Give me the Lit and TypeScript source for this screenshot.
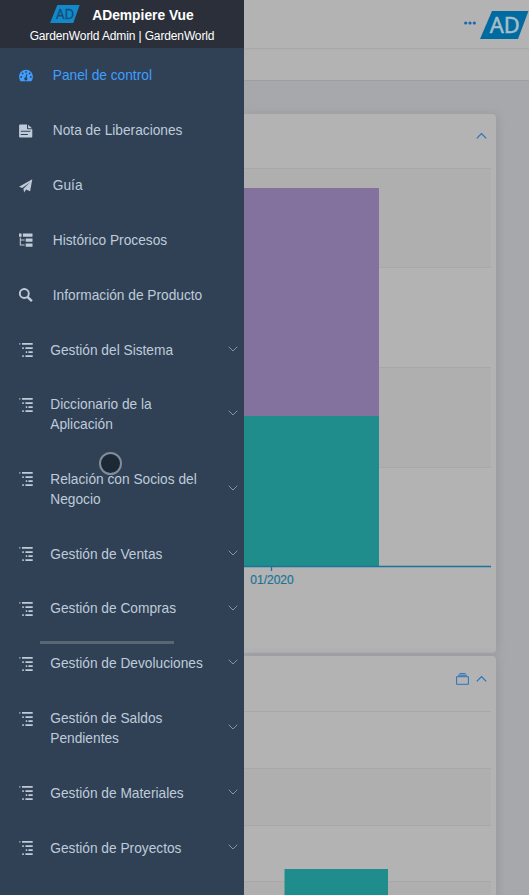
import { LitElement, html, css, svg } from "lit";
import { customElement } from "lit/decorators.js";
import { classMap } from "lit/directives/class-map.js";

type Entry = { icon: string; lines: string[]; group?: boolean; active?: boolean };

const entries: Entry[] = [
  { icon: "gauge", lines: ["Panel de control"], active: true },
  { icon: "document", lines: ["Nota de Liberaciones"] },
  { icon: "plane", lines: ["Guía"] },
  { icon: "tree", lines: ["Histórico Procesos"] },
  { icon: "search", lines: ["Información de Producto"] },
  { icon: "nested", lines: ["Gestión del Sistema"], group: true },
  { icon: "nested", lines: ["Diccionario de la", "Aplicación"], group: true },
  { icon: "nested", lines: ["Relación con Socios del", "Negocio"], group: true },
  { icon: "nested", lines: ["Gestión de Ventas"], group: true },
  { icon: "nested", lines: ["Gestión de Compras"], group: true },
  { icon: "nested", lines: ["Gestión de Devoluciones"], group: true },
  { icon: "nested", lines: ["Gestión de Saldos", "Pendientes"], group: true },
  { icon: "nested", lines: ["Gestión de Materiales"], group: true },
  { icon: "nested", lines: ["Gestión de Proyectos"], group: true },
];

const glyphs: Record<string, unknown> = {
  gauge: svg`<path fill-rule="evenodd" d="M1.600 12.300A7 7 0 0 1 .1 7.800C.1 3.900 3.200.800 7 .800s6.900 3.100 6.900 7a7 7 0 0 1-1.500 4.500ZM7 2a.9.9 0 1 0 0 1.800a.9.9 0 1 0 0-1.800M3.600 3.500a.9.9 0 1 0 0 1.800a.9.9 0 1 0 0-1.800M10.600 3.500a.9.9 0 1 0 0 1.800a.9.9 0 1 0 0-1.800M2.200 7a.9.9 0 1 0 0 1.800a.9.9 0 1 0 0-1.800M11.800 7a.9.9 0 1 0 0 1.800a.9.9 0 1 0 0-1.800M7.300 5L6.500 8.200a1.600 1.600 0 1 0 1.200 0.200L8.300 5.200Z"/>`,
  document: svg`<path fill-rule="evenodd" d="M1.100.5H8V4.300Q8 5.200 8.900 5.200H13.300V12.500Q13.300 13.500 12.300 13.500H1.100Q.1 13.500 .1 12.500V1.500Q.1.5 1.100.5ZM1.800 6.700V7.700H11.500V6.700ZM1.800 10V11H8.800V10ZM9.100.7L13.100 4.300H9.100Z"/>`,
  plane: svg`<path d="M13.300.3L11.100 12.300L7.100 10.600L5.100 13.500L4.400 9.700L11.100 3.200L3.200 9.100L0 7.700Z"/>`,
  tree: svg`<path d="M0 .5h2.600v3.200H0ZM3.900.5H13.500v3.200H3.900ZM6.700 5.500h6.800v3.300H6.700ZM6.700 10.500h6.800v3.300H6.700ZM.8 4.500h1v2.100h3.800v1H1.800v4h3.800v1H.8Z"/>`,
  search: svg`<g fill="none" stroke="currentColor"><circle cx="5.300" cy="5.500" r="4.500" stroke-width="1.900"/><path d="M8.500 8.800L12.900 13.200" stroke-width="2.400"/></g>`,
  nested: svg`<path d="M.2.200h1.200v1.200H.2ZM3 .100h10.700v1.600H3ZM3.300 4.200h1.500v1.700H3.300ZM6.400 4.200H13.700v1.700H6.400ZM6.800 8.300h1.400v1.700H6.800ZM9.400 8.300H13.700v1.700H9.400ZM3.300 12.300h1.500v1.700H3.300ZM6.400 12.300H13.700v1.700H6.400Z"/>`,
};

@customElement("brand-mark")
class BrandMark extends LitElement {
  static styles = css`
    :host { display: block; }
    .mark { display: block; width: 100%; height: 100%; overflow: visible; }
    .plate { fill: var(--plate); }
    .letters { fill: var(--letters); stroke: var(--letters); stroke-width: 0.5; font: 22px "Noto Sans", sans-serif; }
  `;
  render() {
    return html`<svg class="mark" viewBox="0 0 49 29" preserveAspectRatio="none">
      <polygon class="plate" points="12,0 48.500,0 38,29 0,29"></polygon>
      <text class="letters" x="9.800" y="22.400" textLength="30" lengthAdjust="spacingAndGlyphs">AD</text>
    </svg>`;
  }
}

@customElement("side-menu")
class SideMenu extends LitElement {
  static styles = css`
    :host { display: block; background: #304156; }
    .brand { height: 48px; background: #2b2f3a; color: #fff; text-align: center; }
    .title { display: flex; align-items: center; justify-content: center; gap: 12px; height: 20px; padding-top: 5px; font-size: 13.800px; font-weight: 700; }
    .title brand-mark { width: 30px; height: 18px; margin-bottom: 2px; --plate: #118acb; --letters: #174d75; }
    .role { font-size: 12px; letter-spacing: -0.130px; line-height: 14px; margin-top: 4px; }
    .item { display: flex; align-items: flex-start; padding: 18.200px 6px 17.040px 18.600px; color: #bfcbd9; font-size: 13.720px; line-height: 19.650px; }
    .active { color: #409eff; }
    .icon { width: 14px; height: 14px; margin-top: 2.600px; fill: currentColor; flex: none; }
    .label { flex: 1; margin-left: 20.200px; white-space: nowrap; }
    .group .label { margin-left: 17.700px; }
    .group .icon { margin-top: 2.400px; }
    .line { display: block; }
    .arrow { align-self: center; width: 10px; height: 6px; margin-bottom: 3.400px; fill: none; stroke: #8792a0; }
  `;
  render() {
    return html`
      <header class="brand">
        <div class="title"><brand-mark></brand-mark><span>ADempiere Vue</span></div>
        <div class="role">GardenWorld Admin | GardenWorld</div>
      </header>
      <nav>
        ${entries.map((e) => html`<div class=${classMap({ item: true, active: !!e.active, group: !!e.group })}>
          <svg class="icon" viewBox="0 0 14 14">${glyphs[e.icon]}</svg>
          <span class="label">${e.lines.map((l) => html`<span class="line">${l}</span>`)}</span>
          ${e.group ? html`<svg class="arrow" viewBox="0 0 10 6"><path d="M.7.700L5 5L9.300.700"></path></svg>` : ""}
        </div>`)}
      </nav>`;
  }
}

@customElement("app-root")
class AppRoot extends LitElement {
  static styles = css`
    :host { display: flex; position: relative; width: 529px; height: 895px; overflow: hidden; font-family: "Liberation Sans", Arial, sans-serif; }
    side-menu { width: 244px; flex: none; z-index: 1; }
    .main { flex: 1; min-width: 0; background: #a7a8ab; display: flex; flex-direction: column; }
    .navbar { box-sizing: border-box; height: 48px; flex: none; background: #b3b3b3; display: flex; justify-content: flex-end; padding: 11px 0 0; gap: 4px; }
    .navbar brand-mark { width: 49px; height: 28px; --plate: #006ba1; --letters: #a9bdc7; }
    .dots { width: 12px; height: 4px; margin-top: 10px; fill: #1c65b4; }
    .tags { box-sizing: border-box; height: 33px; flex: none; background: #b3b3b3; border-bottom: 1px solid #9c9ea2; box-shadow: inset 0 2px 2px -1px #a6a6a6; }
    .cards { display: flex; flex-direction: column; gap: 3px; padding: 33px 33px 0 0; }
    .card { box-sizing: border-box; flex: none; background: #b3b3b3; border-radius: 0 4px 4px 0; box-shadow: 2px 0 9px 0 #989a9f; overflow: hidden; }
    .first { height: 539px; }
    .second { height: 260px; }
    .tools { box-sizing: border-box; height: 54px; display: flex; justify-content: flex-end; gap: 7px; padding: 16px 9px 0 0; fill: none; stroke: #2871bd; }
    .second .tools { height: 55px; padding-top: 17px; }
    .up { width: 11px; height: 12px; }
    .box { width: 13px; height: 12px; }
    .chart { display: block; width: 247px; }
    .band { fill: #afafaf; }
    .grid { stroke: #a8a8a8; }
    .teal { fill: #208d8d; }
    .violet { fill: #84729e; }
    .axis { stroke: #1c7399; stroke-width: 1.300; }
    .tick { fill: #1c7399; stroke: #1c7399; stroke-width: 0.200; font-size: 12px; text-anchor: middle; }
    .pointer { position: absolute; z-index: 2; box-sizing: border-box; left: 99px; top: 452px; width: 23px; height: 23px; border-radius: 50%; background: #1b2836; border: 2px solid #858c99; }
    .scroll { position: absolute; z-index: 2; left: 40px; top: 641px; width: 134px; height: 3px; background: #5b6675; }
  `;
  private up() {
    return html`<svg class="up" viewBox="0 0 11 12"><path d="M.8 8.300L5.500 3.600L10.200 8.300" stroke-width="1.200"></path></svg>`;
  }
  render() {
    return html`
      <side-menu></side-menu>
      <main class="main">
        <div class="navbar">
          <svg class="dots" viewBox="0 0 12 4"><circle cx="1.700" cy="2" r="1.600"></circle><circle cx="6" cy="2" r="1.600"></circle><circle cx="10.300" cy="2" r="1.600"></circle></svg>
          <brand-mark></brand-mark>
        </div>
        <div class="tags"></div>
        <div class="cards">
          <section class="card first">
            <div class="tools">${this.up()}</div>
            <svg class="chart" width="247" height="430" viewBox="0 0 247 430">
              <rect class="band" width="247" height="99"></rect>
              <rect class="band" y="199" width="247" height="100"></rect>
              <path class="grid" d="M0 .5H247M0 99.500H247M0 199.500H247M0 299.500H247"></path>
              <rect class="violet" y="20" width="135" height="228"></rect>
              <rect class="teal" y="248" width="135" height="150"></rect>
              <path class="axis" d="M0 398.500H247M27.500 398V403"></path>
              <text class="tick" x="28" y="415.500">01/2020</text>
            </svg>
          </section>
          <section class="card second">
            <div class="tools">
              <svg class="box" viewBox="0 0 13 12"><path d="M.6 3.700H12.400V11.300H.6ZM2 2.200H11M3.500.600H9.500"></path></svg>
              ${this.up()}
            </div>
            <svg class="chart" width="247" height="200" viewBox="0 0 247 200">
              <rect class="band" y="57" width="247" height="57"></rect>
              <rect class="band" y="170" width="247" height="30"></rect>
              <path class="grid" d="M0 .5H247M0 57.500H247M0 114.500H247M0 170.500H247"></path>
              <rect class="teal" x="40.500" y="158" width="103.500" height="42"></rect>
            </svg>
          </section>
        </div>
      </main>
      <div class="scroll"></div>
      <div class="pointer"></div>`;
  }
}
